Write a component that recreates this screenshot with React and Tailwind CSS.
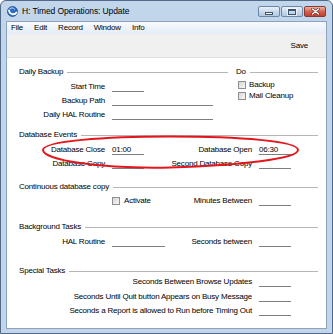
import React from 'react';

const Field = ({ w, value }) => (
    <div className={`${w} h-[12px] border-b border-[#7d7d7d] leading-[14px] whitespace-nowrap`}>{value}</div>
);

const Heading = ({ title, className = '' }) => (
    <div className={`flex items-center h-[12px] leading-[12px] ${className}`}>
        <span className="whitespace-nowrap">{title}</span>
        <div className="flex-1 h-px bg-[#b5b5b5] ml-[4px]" />
    </div>
);

const Checkbox = () => (
    <span className="block w-[8px] h-[8px] border border-[#8f8f8f] bg-linear-to-br from-[#d6d6d6] to-[#f8f8f8]" />
);

// label | field | right label | field
const Row = ({ label, value, w = 'w-[32px]', leftW = 'w-[58px]', right, rvalue, left, className = '' }) => (
    <div className={`flex h-[14px] leading-[14px] ${className}`}>
        <div className="w-[86px] text-right whitespace-nowrap">{label}</div>
        <div className={`${leftW} ml-[7px]`}>
            {left ? left : <Field w={w} value={value} />}
        </div>
        {right && (
            <>
                <div className="w-[82px] text-right whitespace-nowrap">{right}</div>
                <div className="ml-[7px]">
                    <Field w="w-[32px]" value={rvalue} />
                </div>
            </>
        )}
    </div>
);

const SpecialRow = ({ label, className = '' }) => (
    <div className={`flex h-[14px] leading-[14px] ${className}`}>
        <div className="w-[233px] text-right whitespace-nowrap">{label}</div>
        <div className="ml-[7px]">
            <Field w="w-[32px]" />
        </div>
    </div>
);

const TitleButton = ({ kind }) => {
    if (kind === 'close') {
        return (
            <div className="w-[22px] h-[11px] rounded-[2px] border border-[#8b3a30] bg-linear-to-b from-[#eab3a8] via-[#d3624f] to-[#c2402c] flex items-center justify-center">
                <svg width="9" height="7" viewBox="0 0 9 7">
                    <path d="M1.5 1 L7.5 6 M7.5 1 L1.5 6" stroke="#5a2a24" strokeWidth="2.6" strokeLinecap="round" />
                    <path d="M1.5 1 L7.5 6 M7.5 1 L1.5 6" stroke="#ffffff" strokeWidth="1.4" strokeLinecap="round" />
                </svg>
            </div>
        );
    }
    return (
        <div className="w-[22px] h-[11px] rounded-[2px] border border-[#6a87aa] bg-linear-to-b from-[#e9f1fa] via-[#cbdaeb] to-[#b3c8e0] flex items-center justify-center">
            {kind === 'min' ? (
                <div className="w-[8px] h-[3px] mt-[4px] bg-white border border-[#3f546e]" />
            ) : (
                <div className="w-[8px] h-[6px] bg-transparent border-[1.5px] border-t-[2px] border-[#3f546e] outline outline-1 outline-white/60" />
            )}
        </div>
    );
};

const AppIcon = () => (
    <svg width="11" height="11" viewBox="0 0 11 11">
        <circle cx="5.5" cy="5.5" r="5" fill="#2d6cc0" />
        <circle cx="5.5" cy="5.5" r="5" fill="none" stroke="#1c4f96" strokeWidth="0.8" />
        <path d="M2 4.5 C2.5 8.5 7.5 9.5 9.5 6.5" fill="none" stroke="#ffffff" strokeWidth="1.8" strokeLinecap="round" />
        <path d="M3 2.5 C4.5 1.5 6.5 1.8 7.5 3" fill="none" stroke="#cfe2f7" strokeWidth="1" strokeLinecap="round" />
    </svg>
);

const App = () => {
    return (
        <div className="w-[333px] h-[334px] bg-[#c1d5eb] border border-[#52698a] rounded-t-[6px] flex flex-col font-['Liberation_Sans',Arial,sans-serif] text-black overflow-hidden">
            {/* Title bar */}
            <div className="h-[20px] flex items-center pl-[6px] pr-[6px] shrink-0">
                <AppIcon />
                <span className="ml-[4px] text-[8.5px] tracking-[-0.1px] text-black">H: Timed Operations: Update</span>
                <div className="ml-auto flex items-center gap-[1px] mt-[1px]">
                    <TitleButton kind="min" />
                    <TitleButton kind="max" />
                    <TitleButton kind="close" />
                </div>
            </div>

            {/* Client area */}
            <div className="flex-1 mx-[5px] mb-[4px] border border-[#8ea2bb] flex flex-col text-[8px] tracking-[-0.2px]">
                {/* Menu */}
                <div className="h-[12px] leading-[12px] flex gap-[11px] pl-[4px] bg-linear-to-b from-[#f7fafd] to-[#e4ecf6] shrink-0">
                    <span>File</span>
                    <span>Edit</span>
                    <span>Record</span>
                    <span>Window</span>
                    <span>Info</span>
                </div>

                {/* Toolbar */}
                <div className="h-[24px] flex items-center justify-end pr-[18px] bg-[#f0f0f0] border-b border-[#dedede] shrink-0">
                    <span>Save</span>
                </div>

                {/* Form */}
                <div className="flex-1 bg-white relative pl-[12px] pr-[8px] pt-[8px]">
                    <div className="flex">
                        <div className="w-[209px]">
                            <Heading title="Daily Backup" />
                            <Row label="Start Time" leftW="w-[110px]" className="mt-[2px]" />
                            <Row label="Backup Path" leftW="w-[110px]" w="w-[101px]" />
                            <Row label="Daily HAL Routine" leftW="w-[110px]" w="w-[101px]" />
                        </div>
                        <div className="flex-1 ml-[8px]">
                            <Heading title="Do" />
                            <div className="flex items-center h-[11px] mt-[1px] pl-[2px] gap-[3px]">
                                <Checkbox />
                                <span>Backup</span>
                            </div>
                            <div className="flex items-center h-[11px] pl-[2px] gap-[3px]">
                                <Checkbox />
                                <span>Mail Cleanup</span>
                            </div>
                        </div>
                    </div>

                    <Heading title="Database Events" className="mt-[7px]" />
                    <Row label="Database Close" value="01:00" right="Database Open" rvalue="06:30" className="mt-[2px]" />
                    <Row label="Database Copy" right="Second Database Copy" />

                    <Heading title="Continuous database copy" className="mt-[10px]" />
                    <Row
                        className="mt-[1px]"
                        left={
                            <div className="flex items-center h-[14px] gap-[4px]">
                                <Checkbox />
                                <span>Activate</span>
                            </div>
                        }
                        right="Minutes Between"
                    />

                    <Heading title="Background Tasks" className="mt-[13px]" />
                    <Row label="HAL Routine" w="w-[53px]" right="Seconds between" className="mt-[2px]" />

                    <Heading title="Special Tasks" className="mt-[16px]" />
                    <SpecialRow label="Seconds Between Browse Updates" className="-mt-[2px]" />
                    <SpecialRow label="Seconds Until Quit button Appears on Busy Message" className="mt-[1px]" />
                    <SpecialRow label="Seconds a Report is allowed to Run before Timing Out" />

                    {/* red annotation ellipse */}
                    <svg className="absolute left-0 top-0 pointer-events-none" width="319" height="270" viewBox="7 58 319 270">
                        <path
                            d="M43 150 C43 141 105 136.5 170 136.5 C240 136.5 298 141 298 150 C298 159 240 165 170 167.5 C100 169 43 160 43 150 Z"
                            fill="none"
                            stroke="#e3161c"
                            strokeWidth="2"
                        />
                    </svg>
                </div>
            </div>
        </div>
    );
};

export default App;
